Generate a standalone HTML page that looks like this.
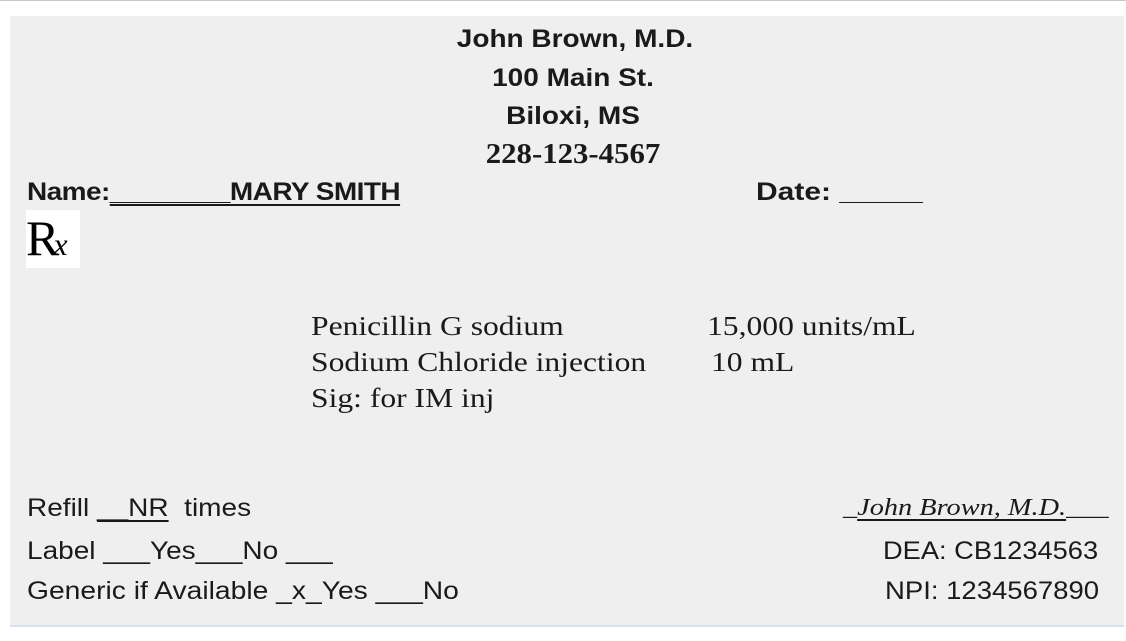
<!DOCTYPE html>
<html><head><meta charset="utf-8"><style>
html,body{margin:0;padding:0;width:1126px;height:641px;background:#fff;overflow:hidden;position:relative}
.top{position:absolute;left:0;top:0;width:1126px;height:1px;background:#c8c8c8}
.box{position:absolute;left:10px;top:16px;width:1114px;height:609px;background:#efefef;border-bottom:2px solid #d6e0ee}
.t{position:absolute;white-space:pre;color:#1a1a1a;font-family:"Liberation Sans",sans-serif;font-size:25px;line-height:30px;transform-origin:0 50%}
.b{font-weight:bold}
.c{width:1126px;left:0;text-align:center;font-size:25px;font-weight:bold;transform-origin:50% 50%}
.s{font-family:"Liberation Serif",serif;font-size:27px}
u{text-decoration-thickness:2px;text-underline-offset:4px}
</style></head><body>
<div class="top"></div>
<div class="box"></div>
<div class="t c" style="top:24px;left:12px;transform:scaleX(1.12)">John Brown, M.D.</div>
<div class="t c" style="top:63px;left:10px;transform:scaleX(1.12)">100 Main St.</div>
<div class="t c" style="top:101px;left:10px;transform:scaleX(1.12)">Biloxi, MS</div>
<div class="t c s" style="top:140px;left:10px;font-size:28px;transform:scaleX(1.1)">228-123-4567</div>
<div class="t b" style="left:27px;top:177px;letter-spacing:-0.5px;transform:scaleX(1.12)">Name:<u>________MARY SMITH</u></div>
<div class="t b" style="left:756px;top:177px;transform:scaleX(1.2)">Date: _____</div>
<div style="position:absolute;left:26px;top:210px;width:54px;height:58px;background:#fff"></div>
<div class="t s" style="left:26px;top:212px;font-size:50px;line-height:52px;color:#000">R<span style="font-size:32px;font-style:italic;margin-left:-6px">x</span></div>
<div class="t s" style="left:311px;top:311px;transform:scaleX(1.17)">Penicillin G sodium</div>
<div class="t s" style="left:707px;top:311px;transform:scaleX(1.17)">15,000 units/mL</div>
<div class="t s" style="left:311px;top:347px;transform:scaleX(1.17)">Sodium Chloride injection</div>
<div class="t s" style="left:711px;top:347px;transform:scaleX(1.17)">10 mL</div>
<div class="t s" style="left:311px;top:383px;transform:scaleX(1.17)">Sig: for IM inj</div>
<div class="t" style="left:27px;top:493px;transform:scaleX(1.12)">Refill <u>__NR</u>  times</div>
<div class="t" style="left:27px;top:536px;transform:scaleX(1.12)">Label ___Yes___No ___</div>
<div class="t" style="left:27px;top:576px;transform:scaleX(1.13)">Generic if Available _x_Yes ___No</div>
<div class="t" style="left:843px;top:493px;font-family:'Liberation Serif',serif;font-style:italic;font-size:24px;transform:scaleX(1.18)">_<u>John Brown, M.D.</u>___</div>
<div class="t" style="left:883px;top:536px;transform:scaleX(1.09)">DEA: CB1234563</div>
<div class="t" style="left:885px;top:576px;transform:scaleX(1.1)">NPI: 1234567890</div>
</body></html>
